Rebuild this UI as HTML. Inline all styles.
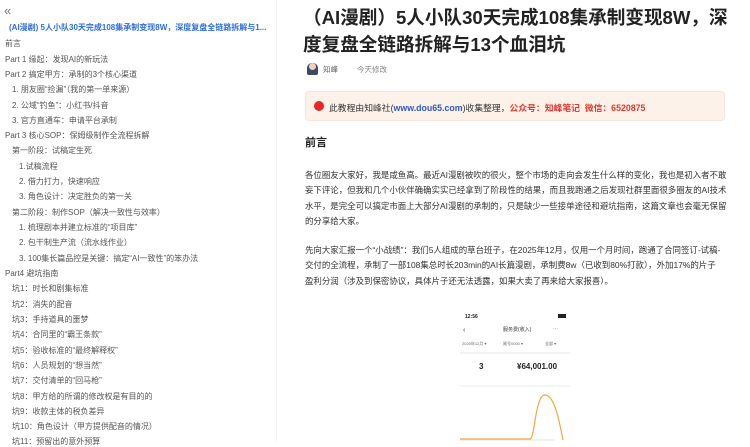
<!DOCTYPE html>
<html><head><meta charset="utf-8"><style>
*{margin:0;padding:0;box-sizing:border-box}
body{width:750px;height:441px;overflow:hidden;background:#fff;font-family:"Liberation Sans","Noto Sans CJK SC",sans-serif;position:relative;color:#333}
#side{position:absolute;left:0;top:0;width:277px;height:441px;border-right:1px solid #eee}
#side div{position:absolute;font-size:8px;color:#555;white-space:nowrap;line-height:10px}
#main{position:absolute;left:305px;top:0;width:425px}
h1{position:absolute;left:-2px;top:4px;white-space:nowrap;font-size:18.6px;line-height:27px;font-weight:bold;color:#222}
.p{position:absolute;left:0;white-space:nowrap;font-size:8.45px;line-height:15.4px;color:#333}
</style></head><body>
<div id="side">
<div style="left:4px;top:6px;font-size:13px;color:#777">«</div>
<div style="left:9px;top:23px;color:#2f6de1;font-weight:bold;font-size:8px">(AI漫剧) 5人小队30天完成108集承制变现8W，深度复盘全链路拆解与1...</div>
<div style="left:5px;top:39px">前言</div>
<div style="left:5px;top:55px">Part 1 缘起：发现AI的新玩法</div>
<div style="left:5px;top:70px">Part 2 搞定甲方：承制的3个核心渠道</div>
<div style="left:12px;top:85px">1. 朋友圈“捡漏”（我的第一单来源）</div>
<div style="left:12px;top:101px">2. 公域“钓鱼”：小红书/抖音</div>
<div style="left:12px;top:116px">3. 官方直通车：申请平台承制</div>
<div style="left:5px;top:131px">Part 3 核心SOP：保姆级制作全流程拆解</div>
<div style="left:12px;top:146px">第一阶段：试稿定生死</div>
<div style="left:19px;top:162px">1.试稿流程</div>
<div style="left:19px;top:177px">2. 借力打力，快速响应</div>
<div style="left:19px;top:192px">3. 角色设计：决定胜负的第一关</div>
<div style="left:12px;top:208px">第二阶段：制作SOP（解决一致性与效率）</div>
<div style="left:19px;top:223px">1. 梳理剧本并建立标准的“项目库”</div>
<div style="left:19px;top:238px">2. 包干制生产流（流水线作业）</div>
<div style="left:19px;top:254px">3. 100集长篇品控是关键：搞定“AI一致性”的笨办法</div>
<div style="left:5px;top:269px">Part4 避坑指南</div>
<div style="left:12px;top:284px">坑1：时长和剧集标准</div>
<div style="left:12px;top:300px">坑2：消失的配音</div>
<div style="left:12px;top:315px">坑3：手持道具的噩梦</div>
<div style="left:12px;top:330px">坑4：合同里的“霸王条款”</div>
<div style="left:12px;top:346px">坑5：验收标准的“最终解释权”</div>
<div style="left:12px;top:361px">坑6：人员规划的“想当然”</div>
<div style="left:12px;top:376px">坑7：交付清单的“回马枪”</div>
<div style="left:12px;top:392px">坑8：甲方给的所谓的修改权是有目的的</div>
<div style="left:12px;top:407px">坑9：收款主体的税负差异</div>
<div style="left:12px;top:422px">坑10：角色设计（甲方提供配音的情况）</div>
<div style="left:12px;top:437px">坑11：预留出的意外预算</div>
</div>
<div id="main">
<h1>（AI漫剧）5人小队30天完成108集承制变现8W，深<br>度复盘全链路拆解与13个血泪坑</h1>
<div style="position:absolute;left:2px;top:63px;width:11px;height:12px;border-radius:5px 5px 2px 2px;background:#3a4a6a"></div>
<div style="position:absolute;left:4px;top:63px;width:7px;height:7px;border-radius:50%;background:#f2d2b8"></div>
<div style="position:absolute;left:18px;top:64px;font-size:7.5px;color:#666">知峰</div>
<div style="position:absolute;left:52px;top:64px;font-size:7.5px;color:#888">今天修改</div>
<div style="position:absolute;left:0;top:91px;width:420px;height:30px;background:#fdf2ea;border-radius:4px;border:1px solid #f8e6da"></div>
<div style="position:absolute;left:9px;top:101px;width:10px;height:10px;border-radius:50%;background:#e8262a"></div>
<div style="position:absolute;left:24px;top:101px;font-size:8.8px;white-space:nowrap;color:#333">此教程由知峰社(<b style="color:#2f56c8">www.dou65.com</b>)收集整理，<b style="color:#e23a30">公众号：知峰笔记&nbsp; 微信：6520875</b></div>
<div style="position:absolute;left:0;top:134px;font-size:11px;font-weight:bold;color:#222">前言</div>
<div class="p" style="top:168px">各位圈友大家好，我是咸鱼高。最近AI漫剧被吹的很火，整个市场的走向会发生什么样的变化，我也是初入者不敢<br>妄下评论，但我和几个小伙伴确确实实已经拿到了阶段性的结果，而且我跑通之后发现社群里面很多圈友的AI技术<br>水平，是完全可以搞定市面上大部分AI漫剧的承制的，只是缺少一些接单途径和避坑指南，这篇文章也会毫无保留<br>的分享给大家。</div>
<div class="p" style="top:243px">先向大家汇报一个“小战绩”：我们5人组成的草台班子，在2025年12月，仅用一个月时间，跑通了合同签订-试稿-<br>交付的全流程，承制了一部108集总时长203min的AI长篇漫剧，承制费8w（已收到80%打款），外加17%的片子<br>盈利分润（涉及到保密协议，具体片子还无法透露，如果大卖了再来给大家报喜）。</div>
<svg style="position:absolute;left:150px;top:305px" width="120" height="136" viewBox="0 0 120 136">
<text x="10" y="13" font-size="5" font-weight="bold" fill="#222">12:56</text>
<rect x="103" y="9" width="8" height="4" fill="#222"/>
<text x="8" y="27" font-size="7" fill="#333">‹</text>
<text x="48" y="26" font-size="5" fill="#333">服务费(收入)</text>
<text x="98" y="26" font-size="5" fill="#555">⋯</text>
<text x="7" y="40" font-size="4" fill="#666">2025年12月 ▾</text>
<text x="48" y="40" font-size="4" fill="#666">尾号0000 ▾</text>
<text x="90" y="40" font-size="4" fill="#666">全部 ▾</text>
<rect x="5" y="47" width="110" height="2" fill="#f3f3f3"/>
<text x="24" y="64" font-size="8" font-weight="bold" fill="#222">3</text>
<text x="62" y="64" font-size="8" font-weight="bold" fill="#222">¥64,001.00</text>
<line x1="5" y1="81" x2="115" y2="81" stroke="#eee"/>
<line x1="5" y1="135" x2="100" y2="135" stroke="#ccc" stroke-width=".5"/>
<path d="M5 134 L75 134 C80 134 80 90 90 90 C100 90 105 120 108 135" fill="none" stroke="#f0a940" stroke-width="1.2"/>
</svg>
</div>
</body></html>
